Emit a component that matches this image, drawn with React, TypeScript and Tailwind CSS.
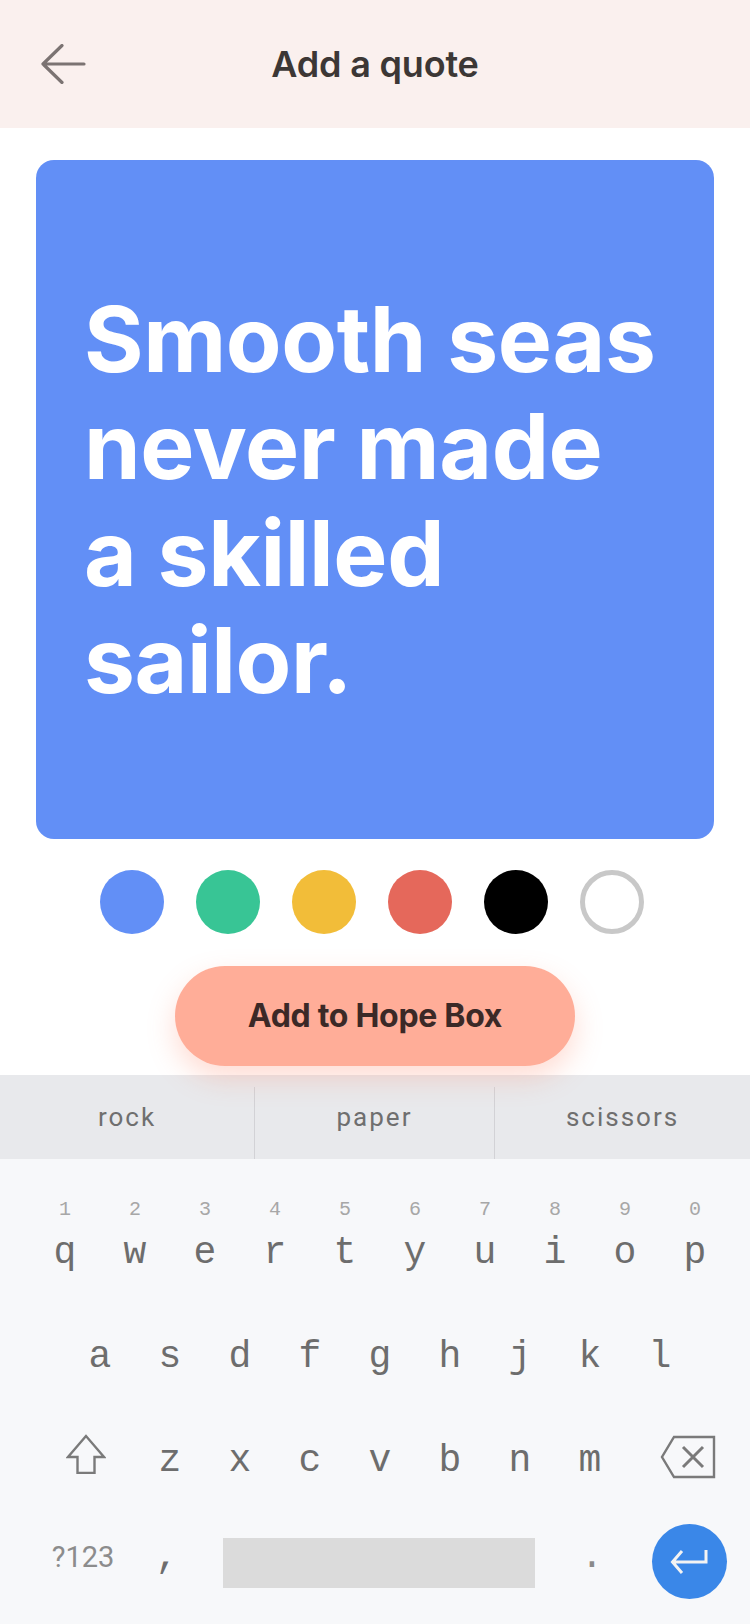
import { FC } from "react";

const swatches = ["bg-[#628ff6]", "bg-[#38c595]", "bg-[#f2bd39]", "bg-[#e5685b]", "bg-black"];

const rowOne = [
  ["1", "q"],
  ["2", "w"],
  ["3", "e"],
  ["4", "r"],
  ["5", "t"],
  ["6", "y"],
  ["7", "u"],
  ["8", "i"],
  ["9", "o"],
  ["0", "p"],
];
const rowTwo = ["a", "s", "d", "f", "g", "h", "j", "k", "l"];
const rowThree = ["z", "x", "c", "v", "b", "n", "m"];

const mono = "font-['Liberation_Mono',monospace]";

const Key: FC<{ label: string }> = ({ label }) => (
  <div className={`w-[70px] flex justify-center text-[38px] leading-[38px] text-[#6d6d6d] ${mono}`}>
    {label}
  </div>
);

const App: FC = () => {
  return (
    <div className="w-[750px] h-[1624px] bg-white flex flex-col font-['Inter',sans-serif] overflow-hidden">
      {/* Header */}
      <div className="h-[128px] bg-[#faf0ee] flex items-center relative">
        <button type="button" className="absolute left-[40px] top-[44px]">
          <svg width="46" height="40" viewBox="0 0 46 40" fill="none">
            <path
              d="M44 20H3M22 1.5L3 20l19 18.5"
              stroke="#7b7372"
              strokeWidth="3.2"
              strokeLinecap="round"
              strokeLinejoin="round"
            />
          </svg>
        </button>
        <p className="w-full text-center text-[36px] font-semibold text-[#3c3735] tracking-[-0.2px]">
          Add a quote
        </p>
      </div>

      {/* Quote card */}
      <div className="mt-[32px] mx-[36px] h-[679px] rounded-[18px] bg-[#628ff6] flex items-center pl-[48px] pr-[30px]">
        <p className="text-white text-[91px] font-bold leading-[107px] tracking-[-0.4px]">
          Smooth seas
          <br />
          never made
          <br />a skilled
          <br />
          sailor.
        </p>
      </div>

      {/* Colour picker */}
      <div className="mt-[31px] flex justify-center gap-[32px] pr-[7px]">
        {swatches.map((c) => (
          <div key={c} className={`w-[64px] h-[64px] rounded-full ${c}`} />
        ))}
        <div className="w-[64px] h-[64px] rounded-full border-[5px] border-[#c8c8c8] bg-white" />
      </div>

      {/* Add button */}
      <div className="mt-[32px] flex justify-center relative z-10">
        <button
          type="button"
          className="w-[400px] h-[100px] rounded-full bg-[#ffad98] text-[32px] font-bold text-[#3b2927] tracking-[-0.3px] shadow-[0_12px_28px_rgba(255,140,110,0.3)]"
        >
          Add to Hope Box
        </button>
      </div>

      {/* Suggestions */}
      <div className="mt-[9px] h-[84px] bg-[#e8e9ec] flex font-['Roboto',sans-serif] text-[26px] tracking-[2px] text-[#6f6f6f]">
        <div className="w-[255px] flex items-center justify-center border-r border-[#d2d2d6] mt-[12px] pb-[12px]">
          rock
        </div>
        <div className="w-[240px] flex items-center justify-center border-r border-[#d2d2d6] mt-[12px] pb-[12px]">
          paper
        </div>
        <div className="flex-1 flex items-center justify-center mt-[12px] pb-[12px]">scissors</div>
      </div>

      {/* Keyboard */}
      <div className="flex-1 bg-[#f7f8fa] pt-[41px] flex flex-col">
        {/* row 1 */}
        <div className="flex pl-[30px]">
          {rowOne.map(([n, l]) => (
            <div key={l} className="w-[70px] flex flex-col items-center">
              <span className={`text-[20px] leading-[20px] text-[#a7a7a7] ${mono}`}>{n}</span>
              <span className={`mt-[14px] text-[38px] leading-[38px] text-[#6d6d6d] ${mono}`}>{l}</span>
            </div>
          ))}
        </div>

        {/* row 2 */}
        <div className="flex pl-[65px] mt-[66px]">
          {rowTwo.map((l) => (
            <Key key={l} label={l} />
          ))}
        </div>

        {/* row 3 */}
        <div className="flex pl-[30px] mt-[66px] items-center h-[38px]">
          <div className="w-[105px] flex justify-center pl-[7px] -mt-[14px]">
            <svg width="40" height="40" viewBox="0 0 40 40" fill="none">
              <path
                d="M20 2L2 23h9.5v16h17V23H38L20 2z"
                stroke="#7a7a7a"
                strokeWidth="2.4"
                strokeLinejoin="miter"
              />
            </svg>
          </div>
          {rowThree.map((l) => (
            <Key key={l} label={l} />
          ))}
          <div className="flex-1 flex justify-center -mt-[8px]">
            <svg width="56" height="44" viewBox="0 0 56 44" fill="none">
              <path d="M54 2H14L2 22l12 20h40V2z" stroke="#7a7a7a" strokeWidth="2.4" strokeLinejoin="miter" />
              <path d="M23 12l20 20M43 12L23 32" stroke="#7a7a7a" strokeWidth="3" />
            </svg>
          </div>
        </div>

        {/* row 4 */}
        <div className="flex pl-[30px] mt-[44px] items-center h-[75px]">
          <div className="w-[106px] flex justify-center mb-[9px] font-['Roboto',sans-serif] text-[29px] leading-[29px] text-[#8c8c8c]">
            ?123
          </div>
          <div className={`w-[62px] flex justify-center mb-[9px] text-[38px] leading-[38px] text-[#6d6d6d] ${mono}`}>
            ,
          </div>
          <div className="ml-[25px] w-[312px] h-[50px] bg-[#dbdbdb] mt-[3px]" />
          <div className={`w-[114px] flex justify-center mb-[9px] text-[38px] leading-[38px] text-[#8a8a8a] ${mono}`}>
            .
          </div>
          <div className="ml-[3px] w-[75px] h-[75px] rounded-full bg-[#3a87e8] flex items-center justify-center">
            <svg width="40" height="26" viewBox="0 0 40 26" fill="none">
              <path
                d="M36 1v12H3M12 2L2.5 13 12 24"
                stroke="#f3f3f3"
                strokeWidth="3"
                strokeLinejoin="miter"
              />
            </svg>
          </div>
        </div>
      </div>
    </div>
  );
};

export default App;
